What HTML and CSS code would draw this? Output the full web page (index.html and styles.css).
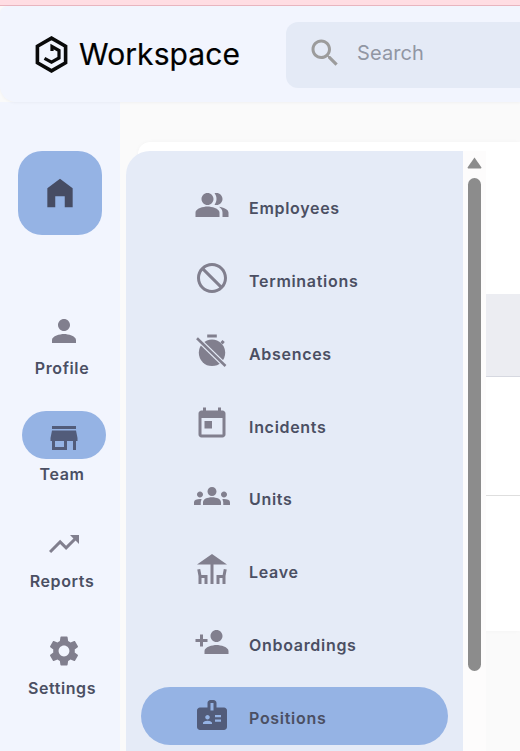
FILE: index.html
```html
<!DOCTYPE html>
<html lang="en">
<head>
    <meta charset="UTF-8">
    <meta name="viewport" content="width=device-width, initial-scale=1.0">
    <title>Workspace</title>
    <link rel="stylesheet" href="styles.css">
</head>
<body>
    <div class="alert-strip"></div>

    <header class="topbar">
        <div class="brand">
            <svg class="brand-logo" viewBox="0 0 33 37" fill="none" stroke="#0a0a0a" stroke-width="3.6">
                <polygon points="16.5,2.1 30.6,10.2 30.6,26.8 16.5,34.9 2.4,26.8 2.4,10.2"/>
                <polyline stroke-width="3.2" points="17,15 17,10.5 24,14.5 24,22 16.5,26.2 9.5,22.4"/>
            </svg>
            <span class="brand-name">Workspace</span>
        </div>
        <div class="search">
            <svg class="search-icon" viewBox="0 0 24 24"><path d="M15.5 14h-.79l-.28-.27C15.41 12.59 16 11.11 16 9.5 16 5.91 13.09 3 9.5 3S3 5.91 3 9.5 5.91 16 9.5 16c1.61 0 3.09-.59 4.23-1.57l.27.28v.79l5 4.99L20.49 19l-4.99-5zm-6 0C7.01 14 5 11.99 5 9.5S7.01 5 9.5 5 14 7.01 14 9.5 11.99 14 9.5 14z"/></svg>
            <span class="search-text">Search</span>
        </div>
    </header>

    <div class="page">
        <nav class="rail">
            <a class="home-tile">
                <svg class="icon" viewBox="0 0 24 24"><path d="M12 3 4 9v12h5v-7h6v7h5V9z"/></svg>
            </a>
            <a class="rail-item">
                <span class="rail-icon">
                    <svg class="icon" viewBox="0 0 24 24"><path d="M12 12c2.21 0 4-1.79 4-4s-1.79-4-4-4-4 1.79-4 4 1.79 4 4 4zm0 2c-2.67 0-8 1.34-8 4v2h16v-2c0-2.66-5.33-4-8-4z"/></svg>
                </span>
                <span class="rail-label">Profile</span>
            </a>
            <a class="rail-item active">
                <span class="rail-icon">
                    <svg class="icon" viewBox="0 0 24 24"><path d="M20 4H4v2h16V4zm1 10v-2l-1-5H4l-1 5v2h1v6h10v-6h4v6h2v-6h1zm-9 4H6v-4h6v4z"/></svg>
                </span>
                <span class="rail-label">Team</span>
            </a>
            <a class="rail-item">
                <span class="rail-icon">
                    <svg class="icon" viewBox="0 0 24 24"><path d="M16 6l2.29 2.29-4.88 4.88-4-4L2 16.59 3.41 18l6-6 4 4 6.3-6.29L22 12V6z"/></svg>
                </span>
                <span class="rail-label">Reports</span>
            </a>
            <a class="rail-item">
                <span class="rail-icon">
                    <svg class="icon" viewBox="0 0 24 24"><path d="M19.14 12.94c.04-.3.06-.61.06-.94 0-.32-.02-.64-.07-.94l2.03-1.58c.18-.14.23-.41.12-.61l-1.92-3.32c-.12-.22-.37-.29-.59-.22l-2.39.96c-.5-.38-1.03-.7-1.62-.94l-.36-2.54c-.04-.24-.24-.41-.48-.41h-3.84c-.24 0-.43.17-.47.41l-.36 2.54c-.59.24-1.13.57-1.62.94l-2.39-.96c-.22-.08-.47 0-.59.22L2.74 8.87c-.12.21-.08.47.12.61l2.03 1.58c-.05.3-.09.63-.09.94s.02.64.07.94l-2.03 1.58c-.18.14-.23.41-.12.61l1.92 3.32c.12.22.37.29.59.22l2.39-.96c.5.38 1.03.7 1.62.94l.36 2.54c.05.24.24.41.48.41h3.84c.24 0 .44-.17.47-.41l.36-2.54c.59-.24 1.13-.56 1.62-.94l2.39.96c.22.08.47 0 .59-.22l1.92-3.32c.12-.22.07-.47-.12-.61l-2.01-1.58zM12 15.6c-1.98 0-3.6-1.62-3.6-3.6s1.62-3.6 3.6-3.6 3.6 1.62 3.6 3.6-1.62 3.6-3.6 3.6z"/></svg>
                </span>
                <span class="rail-label">Settings</span>
            </a>
        </nav>

        <main class="main">
            <div class="card">
                <div class="table-head"></div>
                <div class="table-row"></div>
            </div>
        </main>

        <!-- flyout menu that opens over the page -->
        <div class="flyout">
            <ul class="menu">
                <li class="menu-item">
                    <svg class="icon" viewBox="0 0 24 24"><path d="M16.67 13.13C18.04 14.06 19 15.32 19 17v3h4v-3c0-2.18-3.57-3.47-6.33-3.87zM15 12c2.21 0 4-1.79 4-4s-1.79-4-4-4c-.47 0-.91.1-1.33.24C14.5 5.27 15 6.58 15 8s-.5 2.73-1.33 3.76c.42.14.86.24 1.33.24zM9 12c2.21 0 4-1.79 4-4s-1.79-4-4-4-4 1.79-4 4 1.79 4 4 4zM9 13c-2.67 0-8 1.34-8 4v3h16v-3c0-2.66-5.33-4-8-4z"/></svg>
                    <span class="menu-label">Employees</span>
                </li>
                <li class="menu-item">
                    <svg class="icon" viewBox="0 0 24 24"><path d="M12 2C6.48 2 2 6.48 2 12s4.48 10 10 10 10-4.48 10-10S17.52 2 12 2zM4 12c0-1.85.63-3.55 1.69-4.9L16.9 18.31C15.55 19.37 13.85 20 12 20c-4.42 0-8-3.58-8-8zm14.31 4.9L7.1 5.69C8.45 4.63 10.15 4 12 4c4.42 0 8 3.58 8 8 0 1.85-.63 3.55-1.69 4.9z"/></svg>
                    <span class="menu-label">Terminations</span>
                </li>
                <li class="menu-item">
                    <svg class="icon" viewBox="0 0 24 24">
                        <rect x="8.8" y="1" width="6.4" height="2"/>
                        <circle cx="12" cy="13.2" r="8.8"/>
                        <path d="M17.6 6.2 19 4.6l1.5 1.4-1.4 1.6z"/>
                        <line class="slash-gap" x1="2" y1="3.5" x2="21" y2="22"/>
                        <line class="slash" x1="2" y1="3.5" x2="21" y2="22"/>
                    </svg>
                    <span class="menu-label">Absences</span>
                </li>
                <li class="menu-item">
                    <svg class="icon" viewBox="0 0 24 24"><path d="M19 3h-1V1h-2v2H8V1H6v2H5c-1.11 0-1.99.9-1.99 2L3 19c0 1.1.89 2 2 2h14c1.1 0 2-.9 2-2V5c0-1.1-.9-2-2-2zm0 16H5V8h14v11zM7 10h5v5H7z"/></svg>
                    <span class="menu-label">Incidents</span>
                </li>
                <li class="menu-item">
                    <svg class="icon" viewBox="0 0 24 24"><path d="M12 12.75c1.63 0 3.07.39 4.24.9 1.08.48 1.76 1.56 1.76 2.73V18H6v-1.61c0-1.18.68-2.26 1.76-2.73 1.17-.52 2.61-.91 4.24-.91zM4 13c1.1 0 2-.9 2-2s-.9-2-2-2-2 .9-2 2 .9 2 2 2zm1.13 1.1c-.37-.06-.74-.1-1.13-.1-.99 0-1.93.21-2.78.58C.48 14.9 0 15.62 0 16.43V18h4.5v-1.61c0-.83.23-1.61.63-2.29zM20 13c1.1 0 2-.9 2-2s-.9-2-2-2-2 .9-2 2 .9 2 2 2zm4 3.43c0-.81-.48-1.53-1.22-1.85-.85-.37-1.79-.58-2.78-.58-.39 0-.76.04-1.13.1.4.68.63 1.46.63 2.29V18H24v-1.57zM12 6c1.66 0 3 1.34 3 3s-1.34 3-3 3-3-1.34-3-3 1.34-3 3-3z"/></svg>
                    <span class="menu-label">Units</span>
                </li>
                <li class="menu-item">
                    <svg class="icon" viewBox="0 0 24 24"><path d="M22 9 12 2 2 9h9v13h2V9zM4.14 12l-1.96.37.82 4.37V22h2l.02-4H7v4h2v-6H4.9zM19.1 16H15v6h2v-4h1.98l.02 4h2v-5.26l.82-4.37-1.96-.37z"/></svg>
                    <span class="menu-label">Leave</span>
                </li>
                <li class="menu-item">
                    <svg class="icon" viewBox="0 0 24 24"><path d="M15 12c2.21 0 4-1.79 4-4s-1.79-4-4-4-4 1.79-4 4 1.79 4 4 4zm-9-2V7H4v3H1v2h3v3h2v-3h3v-2H6zm9 4c-2.67 0-8 1.34-8 4v2h16v-2c0-2.66-5.33-4-8-4z"/></svg>
                    <span class="menu-label">Onboardings</span>
                </li>
                <li class="menu-item active">
                    <svg class="icon" viewBox="0 0 24 24"><path d="M20 7h-5V4c0-1.1-.9-2-2-2h-2c-1.1 0-2 .9-2 2v3H4c-1.1 0-2 .9-2 2v11c0 1.1.9 2 2 2h16c1.1 0 2-.9 2-2V9c0-1.1-.9-2-2-2zM9 12c.83 0 1.5.67 1.5 1.5S9.83 15 9 15s-1.5-.67-1.5-1.5S8.17 12 9 12zm3 6H6v-.75c0-1 2-1.5 3-1.5s3 .5 3 1.5V18zm1-9h-2V4h2v5zm5 7.5h-4V15h4v1.5zm0-3h-4V12h4v1.5z"/></svg>
                    <span class="menu-label">Positions</span>
                </li>
            </ul>
            <div class="scrollbar">
                <svg class="scroll-arrow" viewBox="0 0 15 12"><path d="M7.5 0.5 14.5 10.5 14 11.5H1L0.5 10.5z"/></svg>
                <div class="scroll-thumb"></div>
            </div>
        </div>
    </div>
</body>
</html>
```

FILE: styles.css
```css
* {
    padding: 0;
    margin: 0;
    box-sizing: border-box;
    font-family: "Inter", "Liberation Sans", sans-serif;
}
body {
    display: flex;
    flex-direction: column;
    height: 100vh;
    overflow: hidden;
    background: #fafafa;
}
.alert-strip {
    height: 6px;
    flex-shrink: 0;
    background: #ffdde3;
    border-bottom: 1px solid #e9b6c0;
}
.topbar {
    display: flex;
    align-items: center;
    height: 96px;
    flex-shrink: 0;
    background: #f2f5fe;
    border-radius: 8px 0 0 16px;
    box-shadow: 0 1px 3px rgba(0, 0, 0, 0.04);
    z-index: 1;
}
.brand {
    display: flex;
    align-items: center;
    gap: 11px;
    width: 286px;
    flex-shrink: 0;
    padding-left: 35px;
}
.brand-logo {
    width: 33px;
    height: 37px;
}
.brand-name {
    font-size: 30px;
    font-weight: 400;
    letter-spacing: 0.1px;
    color: #000;
    -webkit-text-stroke: 0.2px #000;
}
.search {
    display: flex;
    flex: 1;
    align-items: center;
    gap: 14px;
    height: 66px;
    margin-top: 2px;
    padding-left: 21px;
    background: #e4eaf6;
    border-radius: 12px 0 0 12px;
}
.search-icon {
    width: 36px;
    height: 36px;
    margin-bottom: 5px;
    fill: #9c9c9c;
}
.search-text {
    margin-bottom: 4px;
    font-size: 20px;
    letter-spacing: 0.1px;
    color: #9196a3;
}
.page {
    position: relative;
    display: flex;
    flex: 1;
    min-height: 0;
}
.icon {
    width: 36px;
    height: 36px;
    flex-shrink: 0;
    fill: #817f8e;
}

/* left rail */
.rail {
    display: flex;
    flex-direction: column;
    width: 120px;
    flex-shrink: 0;
    padding-top: 49px;
    background: #f2f5fe;
}
.home-tile {
    display: flex;
    align-items: center;
    justify-content: center;
    width: 84px;
    height: 84px;
    margin: 0 0 69px 18px;
    background: #95b3e4;
    border-radius: 24px;
}
.home-tile .icon {
    width: 38px;
    height: 38px;
    fill: #464c63;
}
.rail-item {
    display: flex;
    flex-direction: column;
    align-items: center;
    width: 120px;
    height: 106.67px;
}
.rail-icon {
    display: flex;
    justify-content: center;
    width: 84px;
    height: 48px;
    flex-shrink: 0;
    margin-left: 8px;
    padding-top: 9px;
    border-radius: 24px;
}
.rail-label {
    margin-left: 4px;
    font-size: 16px;
    font-weight: 600;
    line-height: 32px;
    letter-spacing: 0.6px;
    color: #4b4f63;
}
.rail-item.active .rail-icon {
    background: #95b3e4;
}
.rail-item.active .icon {
    fill: #525c7a;
}
.rail-item.active .rail-label {
    margin-top: -1px;
}

/* page behind the flyout */
.main {
    flex: 1;
    min-width: 0;
    padding: 40px 0 0 18px;
}
.card {
    height: 489px;
    padding-top: 152px;
    background: #fff;
    border-radius: 12px 0 0 0;
    box-shadow: 0 0 4px rgba(0, 0, 0, 0.03);
}
.table-head {
    height: 83px;
    background: #ecedf2;
    border-bottom: 1px solid #d6d8e0;
}
.table-row {
    height: 119px;
    border-bottom: 1px solid #dedede;
}

/* flyout menu */
.flyout {
    position: absolute;
    left: 126px;
    top: 49px;
    display: flex;
    width: 360px;
    height: 600px;
}
.menu {
    flex: 1;
    display: flex;
    flex-direction: column;
    gap: 14.86px;
    padding: 26px 15px 0;
    background: #e5ebf7;
    border-radius: 24px 0 0 0;
    list-style: none;
}
.menu-item {
    display: flex;
    align-items: center;
    gap: 19px;
    height: 58px;
    flex-shrink: 0;
    padding-left: 53px;
    border-radius: 29px;
}
.menu-label {
    padding-top: 4px;
    font-size: 16px;
    font-weight: 600;
    letter-spacing: 0.7px;
    color: #4b4f63;
}
.menu-item .icon {
    margin-bottom: 2px;
}
.menu-item.active {
    background: #95b3e4;
}
.menu-item.active .icon {
    fill: #525c7a;
}
.slash {
    stroke: #817f8e;
    stroke-width: 1.7;
}
.slash-gap {
    stroke: #e5ebf7;
    stroke-width: 3.4;
}
.scrollbar {
    display: flex;
    flex-direction: column;
    align-items: center;
    width: 23px;
    flex-shrink: 0;
    padding-top: 6px;
    background: #fdfcfc;
}
.scroll-arrow {
    width: 15px;
    height: 12px;
    margin-right: 1px;
    fill: #8c8c8c;
}
.scroll-thumb {
    width: 13px;
    height: 493px;
    margin-top: 9px;
    margin-right: 1px;
    background: #8c8c8c;
    border-radius: 7px;
}
```
